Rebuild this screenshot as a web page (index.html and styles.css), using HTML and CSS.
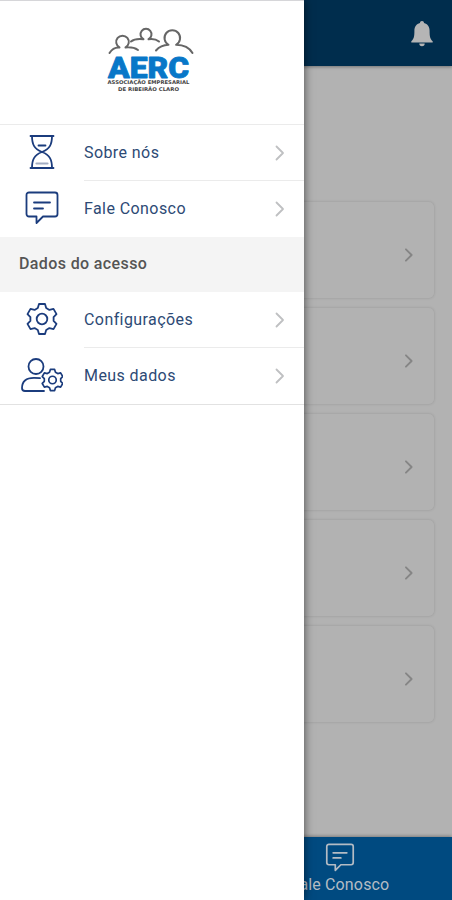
FILE: index.html
```html
<!DOCTYPE html>
<html lang="pt-BR">
<head>
  <meta charset="UTF-8">
  <meta name="viewport" content="width=device-width, initial-scale=1.0">
  <title>AERC</title>
  <link rel="stylesheet" href="styles.css">
</head>
<body>
  <!-- shared icons -->
  <svg class="sprite" width="0" height="0">
    <symbol id="chevron" viewBox="0 0 10 16"><path d="M1.5 1.5 8 8l-6.500 6.500"/></symbol>
    <symbol id="chat" viewBox="0 0 34 34">
      <path d="M4 1.500h26a2.500 2.500 0 0 1 2.500 2.500v19a2.500 2.500 0 0 1-2.500 2.500H18L11.500 32v-6.500H4A2.500 2.500 0 0 1 1.500 23V4A2.500 2.500 0 0 1 4 1.500z"/>
      <path d="M9 11.500h16M9 17.500h9"/>
    </symbol>
    <symbol id="gear" viewBox="-17 -17 34 34">
      <path d="M-4.200-11-3-15H3L4.200-11 7.400-9.100 11.500-10.100 14.500-4.900 11.600-1.900V1.900L14.500 4.900 11.500 10.100 7.400 9.100 4.200 11 3 15H-3L-4.200 11-7.400 9.100-11.500 10.100-14.500 4.900-11.600 1.900V-1.900L-14.500-4.900-11.500-10.100-7.400-9.100z"/>
      <circle r="5.300"/>
    </symbol>
  </svg>

  <div class="page">
    <header class="toolbar">
      <svg class="bell" viewBox="0 0 22 26"><path d="M11 0c1.300 0 2 .9 2 2.100 3.600.9 5.600 3.800 5.600 7.700 0 6 .6 8.400 3.100 10.500v1.200H.3v-1.200C2.800 18.200 3.400 15.800 3.400 9.800 3.400 5.900 5.400 3 9 2.100 9 .9 9.700 0 11 0zM8.300 22.500h5.400a2.700 2.700 0 0 1-5.400 0z"/></svg>
    </header>
    <main class="cards">
      <div class="card"><svg class="chevron"><use href="#chevron"/></svg></div>
      <div class="card"><svg class="chevron"><use href="#chevron"/></svg></div>
      <div class="card"><svg class="chevron"><use href="#chevron"/></svg></div>
      <div class="card"><svg class="chevron"><use href="#chevron"/></svg></div>
      <div class="card"><svg class="chevron"><use href="#chevron"/></svg></div>
    </main>
    <footer class="tabs">
      <div class="tab">
        <svg class="tab-icon"><use href="#chat"/></svg>
        <span>Fale Conosco</span>
      </div>
    </footer>
  </div>

  <nav class="menu">
    <div class="brand">
      <svg class="logo" viewBox="0 0 90 66">
        <g class="people">
          <path d="M4.500 26C7 22 10 20 14.500 20.500a6.300 6.300 0 1 1 6 0C26 20 30 21 33 23"/>
          <path d="M26 14.500C29 12 33 11.500 38.500 12.200a5.500 5.500 0 1 1 5 0C48 11.500 51 12 54 14.500"/>
          <path d="M51 23.500C54 20 58 18 63.500 17.800a7.800 7.800 0 1 1 7.600 0C78 18 84 20 87.500 26"/>
        </g>
        <text class="logo-name" x="3" y="50.500" textLength="81" lengthAdjust="spacingAndGlyphs">AERC</text>
        <text class="logo-sub" x="2.500" y="56.700" textLength="82" lengthAdjust="spacingAndGlyphs">ASSOCIAÇÃO EMPRESARIAL</text>
        <text class="logo-sub" x="13" y="63.500" textLength="61" lengthAdjust="spacingAndGlyphs">DE RIBEIRÃO CLARO</text>
      </svg>
    </div>

    <a class="item">
      <span class="item-icon">
        <svg class="hourglass" viewBox="0 0 26 36"><path d="M1.500 2h23M1.500 34h23M3 2c0 8 2 13 10 16C5 21 3 26 3 34M23 2c0 8-2 13-10 16 8 3 10 8 10 16M9.500 11.500h7"/><path class="sand" d="M7.500 29.500h11"/></svg>
      </span>
      <span class="item-label">Sobre nós<svg class="chevron"><use href="#chevron"/></svg></span>
    </a>
    <a class="item last">
      <span class="item-icon"><svg class="chat"><use href="#chat"/></svg></span>
      <span class="item-label">Fale Conosco<svg class="chevron"><use href="#chevron"/></svg></span>
    </a>

    <h2 class="divider">Dados do acesso</h2>

    <a class="item">
      <span class="item-icon"><svg class="gear"><use href="#gear"/></svg></span>
      <span class="item-label">Configurações<svg class="chevron"><use href="#chevron"/></svg></span>
    </a>
    <a class="item last end">
      <span class="item-icon">
        <svg class="user" viewBox="0 0 42 34">
          <circle cx="15" cy="8.500" r="7.500"/>
          <path d="M19 20.200c-2-.4-4-.4-6-.4C5 19.800 1 23.500 1 30c0 2 .8 3 3 3h19"/>
          <use class="small-gear" href="#gear" x="19.500" y="10" width="24" height="24"/>
        </svg>
      </span>
      <span class="item-label">Meus dados<svg class="chevron"><use href="#chevron"/></svg></span>
    </a>
  </nav>
</body>
</html>
```
FILE: styles.css
```css
* {
  box-sizing: border-box;
}
body {
  margin: 0;
  height: 900px;
  overflow: hidden;
  position: relative;
  font-family: Roboto, "Liberation Sans", sans-serif;
  background: #b2b2b2;
}
.sprite {
  display: block;
}
svg {
  fill: none;
  stroke: currentColor;
  stroke-width: 1.8;
  stroke-linecap: round;
  stroke-linejoin: round;
}

/* dimmed page behind the menu */
.page {
  display: flex;
  flex-direction: column;
  height: 900px;
}
.toolbar {
  display: flex;
  justify-content: flex-end;
  height: 66px;
  padding: 21px 19px 0 0;
  background: #002d4d;
  box-shadow: 0 1px 3px rgba(0, 0, 0, 0.35);
}
.bell {
  width: 22px;
  height: 26px;
  fill: #b5b5b5;
  stroke: none;
}
.cards {
  flex: 1;
  display: flex;
  flex-direction: column;
  gap: 10px;
  padding: 136px 18px 0;
}
.card {
  display: flex;
  align-items: center;
  justify-content: flex-end;
  height: 96px;
  padding: 9px 20px 0 0;
  border-radius: 5px;
  background: #b2b2b2;
  box-shadow: 0 0 3px rgba(0, 0, 0, 0.16);
}
.chevron {
  width: 10px;
  height: 16px;
  color: #bfc0c2;
}
.card .chevron {
  height: 14px;
  color: #858585;
  stroke-width: 2.1;
}
.tabs {
  display: flex;
  justify-content: center;
  height: 63px;
  padding-left: 228px;
  background: #004a80;
  box-shadow: 0 -1px 3px rgba(0, 0, 0, 0.3);
}
.tab {
  display: flex;
  flex-direction: column;
  align-items: center;
  gap: 4px;
  padding-top: 6px;
  font-size: 16px;
  letter-spacing: 0.15px;
  line-height: 18px;
  color: #b4bcc4;
}
.tab-icon {
  width: 30px;
  height: 29px;
  stroke-width: 2;
}

/* side menu */
.menu {
  position: absolute;
  top: 0;
  left: 0;
  width: 304px;
  height: 900px;
  background: #fff;
  border-top: 1px solid #d6d6d9;
  box-shadow: 0 0 9px rgba(0, 0, 0, 0.6);
  color: #2d4a75;
}
.brand {
  height: 124px;
  padding: 26px 0 0 105px;
  border-bottom: 1px solid #ebebeb;
}
.logo {
  display: block;
  width: 90px;
  height: 66px;
}
.people {
  stroke: #666;
  stroke-width: 2;
}
.logo-name {
  font: 900 29px Roboto, sans-serif;
  fill: #0877c8;
  stroke: #0877c8;
  stroke-width: 0.8;
}
.logo-sub {
  font: bold 5px "DejaVu Sans", sans-serif;
  fill: #444;
  stroke: none;
}
.item {
  display: flex;
  height: 56px;
}
.item-icon {
  display: flex;
  align-items: center;
  justify-content: center;
  width: 84px;
  padding-bottom: 2px;
  color: #1b3c7d;
}
.item-label {
  flex: 1;
  display: flex;
  align-items: center;
  justify-content: space-between;
  padding-right: 19px;
  border-bottom: 1px solid #ebebeb;
  font-size: 16px;
  letter-spacing: 0.42px;
}
.last .item-label {
  border-bottom-color: transparent;
}
.end {
  height: 57px;
  border-bottom: 1px solid #e2e2e2;
}
.hourglass {
  width: 26px;
  height: 36px;
}
.sand {
  stroke: #a3adc2;
  stroke-width: 2.2;
}
.chat,
.gear {
  width: 34px;
  height: 34px;
}
.user {
  width: 42px;
  height: 34px;
}
.small-gear {
  stroke-width: 2.4;
}
.divider {
  height: 55px;
  margin: 0;
  padding-left: 19px;
  background: #f4f4f4;
  font-size: 16px;
  line-height: 54px;
  font-weight: 500;
  letter-spacing: 0.38px;
  color: #555;
}
```
